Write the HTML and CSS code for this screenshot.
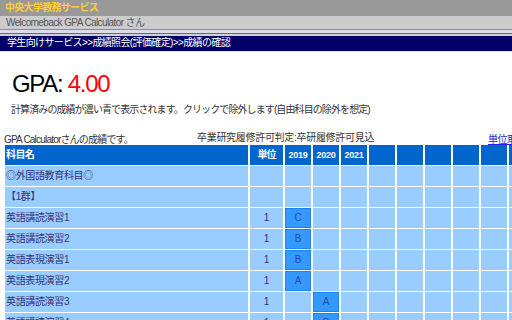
FILE: index.html
```html
<!DOCTYPE html>
<html lang="ja">
<head>
<meta charset="utf-8">
<title>成績の確認</title>
<link rel="stylesheet" href="styles.css">
</head>
<body>
<div class="top">中央大学教務サービス</div>
<div class="welcome">Welcomeback GPA Calculator さん</div>
<div class="rule"></div>
<div class="crumb">学生向けサービス&gt;&gt;成績照会(評価確定)&gt;&gt;成績の確認</div>
<main class="content">
  <h1 class="gpa">GPA: <span class="gpa-val">4.00</span></h1>
  <p class="note">計算済みの成績が濃い青で表示されます。クリックで除外します(自由科目の除外を想定)</p>
  <div class="caption">
    <span class="cap-left">GPA Calculatorさんの成績です。</span>
    <span class="cap-mid">卒業研究履修許可判定:卒研履修許可見込</span>
    <a class="cap-link" href="#">単位取得状況</a>
  </div>
  <table class="grades">
    <colgroup>
      <col class="c-name"><col class="c-unit">
      <col class="c-year"><col class="c-year"><col class="c-year"><col class="c-year"><col class="c-year">
      <col class="c-year"><col class="c-year"><col class="c-year"><col class="c-year"><col class="c-year">
    </colgroup>
    <thead>
      <tr>
        <th class="name">科目名</th><th class="unit">単位</th>
        <th class="year">2019</th><th class="year">2020</th><th class="year">2021</th>
        <th></th><th></th><th></th><th></th><th></th><th></th><th></th>
      </tr>
    </thead>
    <tbody>
      <tr><td class="name">◎外国語教育科目◎</td><td></td><td></td><td></td><td></td><td></td><td></td><td></td><td></td><td></td><td></td><td></td></tr>
      <tr><td class="name">【1群】</td><td></td><td></td><td></td><td></td><td></td><td></td><td></td><td></td><td></td><td></td><td></td></tr>
      <tr><td class="name">英語講読演習1</td><td class="unit">1</td><td class="grade">C</td><td></td><td></td><td></td><td></td><td></td><td></td><td></td><td></td><td></td></tr>
      <tr><td class="name">英語講読演習2</td><td class="unit">1</td><td class="grade">B</td><td></td><td></td><td></td><td></td><td></td><td></td><td></td><td></td><td></td></tr>
      <tr><td class="name">英語表現演習1</td><td class="unit">1</td><td class="grade">B</td><td></td><td></td><td></td><td></td><td></td><td></td><td></td><td></td><td></td></tr>
      <tr><td class="name">英語表現演習2</td><td class="unit">1</td><td class="grade">A</td><td></td><td></td><td></td><td></td><td></td><td></td><td></td><td></td><td></td></tr>
      <tr><td class="name">英語講読演習3</td><td class="unit">1</td><td></td><td class="grade">A</td><td></td><td></td><td></td><td></td><td></td><td></td><td></td><td></td></tr>
      <tr><td class="name">英語講読演習4</td><td class="unit">1</td><td></td><td class="grade">B</td><td></td><td></td><td></td><td></td><td></td><td></td><td></td><td></td></tr>
    </tbody>
  </table>
</main>
</body>
</html>
```
FILE: styles.css
```css
html, body {
  margin: 0;
  padding: 0;
  overflow: hidden;
  background: #ffffff;
}
body {
  width: 512px;
  height: 320px;
  font-family: "Liberation Sans", "Noto Sans CJK JP", sans-serif;
  font-size: 10px;
  color: #222222;
}
.top {
  height: 16px;
  line-height: 16px;
  background: #999999;
  color: #ffcc33;
  font-weight: bold;
  padding-left: 5px;
  letter-spacing: -0.7px;
  white-space: nowrap;
}
.welcome {
  height: 13px;
  line-height: 13px;
  background: #cccccc;
  color: #555555;
  padding-left: 6px;
  letter-spacing: -0.6px;
  white-space: nowrap;
}
.rule {
  height: 3px;
  border-top: 1px solid #8a8aa8;
  border-bottom: 1px solid #6a6a70;
  background: #dcdce4;
  box-shadow: 0 2px 0 #cfcfd6;
  margin-bottom: 2px;
}
.crumb {
  height: 15px;
  line-height: 14px;
  background: #000066;
  color: #ffffff;
  padding-left: 7px;
  letter-spacing: -0.63px;
  white-space: nowrap;
  border-bottom: 1px solid #e6e6ef;
}
.content {
  display: block;
}
.gpa {
  margin: 20px 0 0 12px;
  font-size: 24px;
  line-height: 24px;
  font-weight: normal;
  color: #000000;
  letter-spacing: -1.3px;
  white-space: nowrap;
}
.gpa-val {
  color: #ff0000;
}
.note {
  margin: 8px 0 0 11px;
  line-height: 12px;
  color: #333333;
  letter-spacing: -0.9px;
  white-space: nowrap;
}
.caption {
  display: grid;
  grid-template-columns: 193px 291px auto;
  height: 15px;
  margin-top: 13px;
  padding-left: 4px;
  white-space: nowrap;
  line-height: 10px;
}
.cap-left {
  align-self: end;
  margin-bottom: -1px;
  color: #333333;
  letter-spacing: -0.8px;
}
.cap-mid {
  align-self: start;
  margin-top: 4px;
  color: #333333;
  letter-spacing: -0.3px;
}
.cap-link {
  align-self: end;
  margin-bottom: -1px;
  color: #2222dd;
  letter-spacing: -0.4px;
}
.grades {
  table-layout: fixed;
  width: 562px;
  border-collapse: separate;
  border-spacing: 2px 1px;
  margin: 0 0 0 3px;
  background: #ffffff;
}
.c-name { width: 243px; }
.c-unit { width: 33px; }
.c-year { width: 26px; }
.grades th,
.grades td {
  height: 20px;
  padding: 0;
  white-space: nowrap;
  overflow: hidden;
}
.grades th {
  background: #0066cc;
  color: #ffffff;
  font-weight: bold;
  text-align: center;
  line-height: 20px;
}
.grades th.name {
  text-align: left;
  padding-left: 1px;
  letter-spacing: -0.6px;
}
.grades th.unit {
  letter-spacing: -1px;
}
.grades th.year {
  font-size: 9px;
  letter-spacing: -0.3px;
}
.grades td {
  background: #99ccff;
  color: #333377;
  text-align: center;
  line-height: 20px;
}
.grades td.name {
  text-align: left;
  padding-left: 1px;
  letter-spacing: -0.35px;
}
.grades td.grade {
  background: #3399ff;
  box-shadow: inset 0 0 0 1px #1c86f0;
  color: #2a4f99;
}
```
